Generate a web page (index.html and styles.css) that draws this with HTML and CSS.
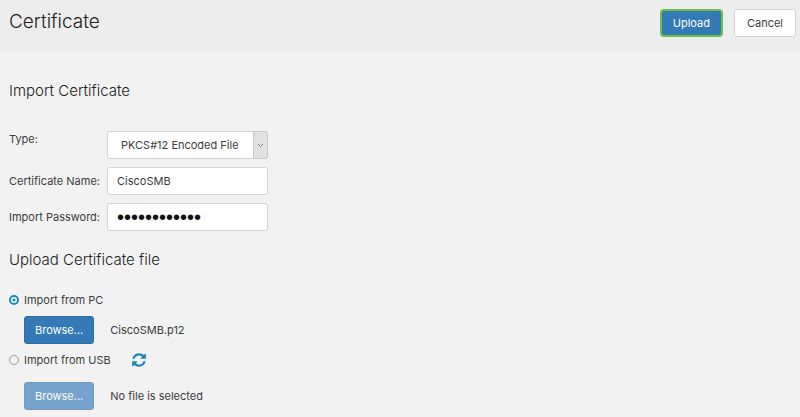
FILE: index.html
```html
<!DOCTYPE html>
<html lang="en">
  <head>
    <meta charset="utf-8">
    <title>Certificate</title>
    <meta name="viewport" content="width=device-width, initial-scale=1">
    <link rel="stylesheet" href="styles.css">
  </head>
  <body>
    <form class="page">
      <header class="header">
        <h1 class="page-title">Certificate</h1>
        <div class="actions">
          <button class="btn btn-primary btn-focused" type="submit">Upload</button>
          <button class="btn btn-default" type="button">Cancel</button>
        </div>
      </header>
      <main class="content">
        <h2 class="section-title">Import Certificate</h2>
        <div class="fields">
          <label class="label label-top" for="type">Type:</label>
          <div class="select">
            <select class="control" id="type">
              <option>PKCS#12 Encoded File</option>
            </select>
            <span class="select-arrow">
              <svg width="7" height="5" viewBox="0 0 7 5"><path d="M1 1l2.5 2.5L6 1" fill="none" stroke="#777" stroke-width="1"/></svg>
            </span>
          </div>
          <label class="label" for="name">Certificate Name:</label>
          <input class="control" id="name" type="text" value="CiscoSMB">
          <label class="label" for="password">Import Password:</label>
          <input class="control control-password" id="password" type="password" value="certificate1">
        </div>
        <h2 class="section-title">Upload Certificate file</h2>
        <div class="sources">
          <div class="source">
            <input class="radio" id="fromPc" type="radio" name="source" checked>
            <label for="fromPc">Import from PC</label>
          </div>
          <div class="file">
            <button class="btn btn-primary" type="button">Browse...</button>
            <span>CiscoSMB.p12</span>
          </div>
          <div class="source source-usb">
            <input class="radio" id="fromUsb" type="radio" name="source">
            <label for="fromUsb">Import from USB</label>
            <button class="refresh" type="button" aria-label="Refresh">
              <svg width="14" height="16" viewBox="0 0 1536 1792"><path fill="#1689b8" d="M1511 1056q0 5-1 7-64 268-268 434.500T764 1664q-146 0-282.500-55T238 1452l-129 129q-19 19-45 19t-45-19-19-45v-448q0-26 19-45t45-19h448q26 0 45 19t19 45-19 45l-137 137q71 66 161 102t187 36q134 0 250-65t186-179q11-17 53-117 8-23 30-23h192q13 0 22.500 9.500t9.500 22.500zm25-800v448q0 26-19 45t-45 19h-448q-26 0-45-19t-19-45 19-45l138-138Q969 384 768 384q-134 0-250 65T332 628q-11 17-53 117-8 23-30 23H50q-13 0-22.500-9.500T18 736v-7q65-268 270-434.500T768 128q146 0 284 55.500T1297 340l130-129q19-19 45-19t45 19 19 45z"/></svg>
            </button>
          </div>
          <div class="file">
            <button class="btn btn-primary" type="button" disabled>Browse...</button>
            <span>No file is selected</span>
          </div>
        </div>
      </main>
    </form>
  </body>
</html>
```
FILE: styles.css
```css
* {
  box-sizing: border-box;
}
body {
  margin: 0;
  background: #f2f2f2;
  color: #3c3c3c;
  font-family: Inter, "Liberation Sans", sans-serif;
  font-size: 11px;
  line-height: 16px;
}
.header {
  display: flex;
  justify-content: space-between;
  align-items: flex-start;
  padding: 8px 4px 15px 9px;
  background: #ededed;
}
.page-title {
  margin: 0;
  color: #222;
  font-size: 19px;
  font-weight: 300;
  line-height: 28px;
}
.actions {
  display: flex;
  gap: 11px;
  padding-top: 1px;
}
.btn {
  height: 28px;
  padding: 0 10px;
  border: 1px solid transparent;
  border-radius: 3px;
  font: inherit;
}
.btn-primary {
  border-color: #2e6da4;
  background: #337ab7;
  color: #fff;
}
.btn-primary:disabled {
  opacity: 0.65;
}
.btn-focused {
  padding: 0 11px;
  border: 2px solid #6cc04a;
  border-radius: 4px;
}
.btn-default {
  padding: 0 12px;
  border-color: #d4d4d4;
  background: #fff;
  color: #3c3c3c;
}
.content {
  padding: 29px 9px 7px;
}
.section-title {
  margin: 0;
  color: #222;
  font-size: 15px;
  font-weight: 300;
  line-height: 20px;
}
.fields {
  display: grid;
  grid-template-columns: 92px 161px;
  gap: 8px 6px;
  margin: 30px 0 19px;
}
.label {
  align-self: center;
  white-space: nowrap;
}
.label-top {
  align-self: start;
}
.control {
  display: block;
  width: 100%;
  height: 28px;
  padding: 0 9px;
  border: 1px solid #d4d4d4;
  border-radius: 3px;
  background: #fff;
  color: #3c3c3c;
  font: inherit;
}
.control-password {
  color: #111;
  font-family: "Liberation Sans", sans-serif;
  font-size: 20px;
}
.select {
  position: relative;
}
.select .control {
  padding: 0 13px;
  appearance: none;
}
.select-arrow {
  position: absolute;
  top: 0;
  right: 0;
  display: flex;
  align-items: center;
  justify-content: center;
  width: 15px;
  height: 100%;
  border: 1px solid #c8c8c8;
  border-radius: 0 3px 3px 0;
  background: #e1e1e1;
  pointer-events: none;
}
.sources {
  margin-top: 22px;
}
.source {
  display: flex;
  align-items: center;
  height: 16px;
}
.source-usb {
  margin-bottom: 14px;
}
.radio {
  width: 10px;
  height: 10px;
  margin: 0 5px 0 0;
  border: 1px solid #999;
  border-radius: 50%;
  appearance: none;
}
.radio:checked {
  border: 2px solid #1689b8;
  background: radial-gradient(#1689b8 1px, #fff 2px);
}
.refresh {
  display: flex;
  margin-left: 21px;
  padding: 0;
  border: 0;
  background: none;
}
.file {
  display: flex;
  align-items: center;
  gap: 16px;
  margin: 8px 0 8px 15px;
}
```
